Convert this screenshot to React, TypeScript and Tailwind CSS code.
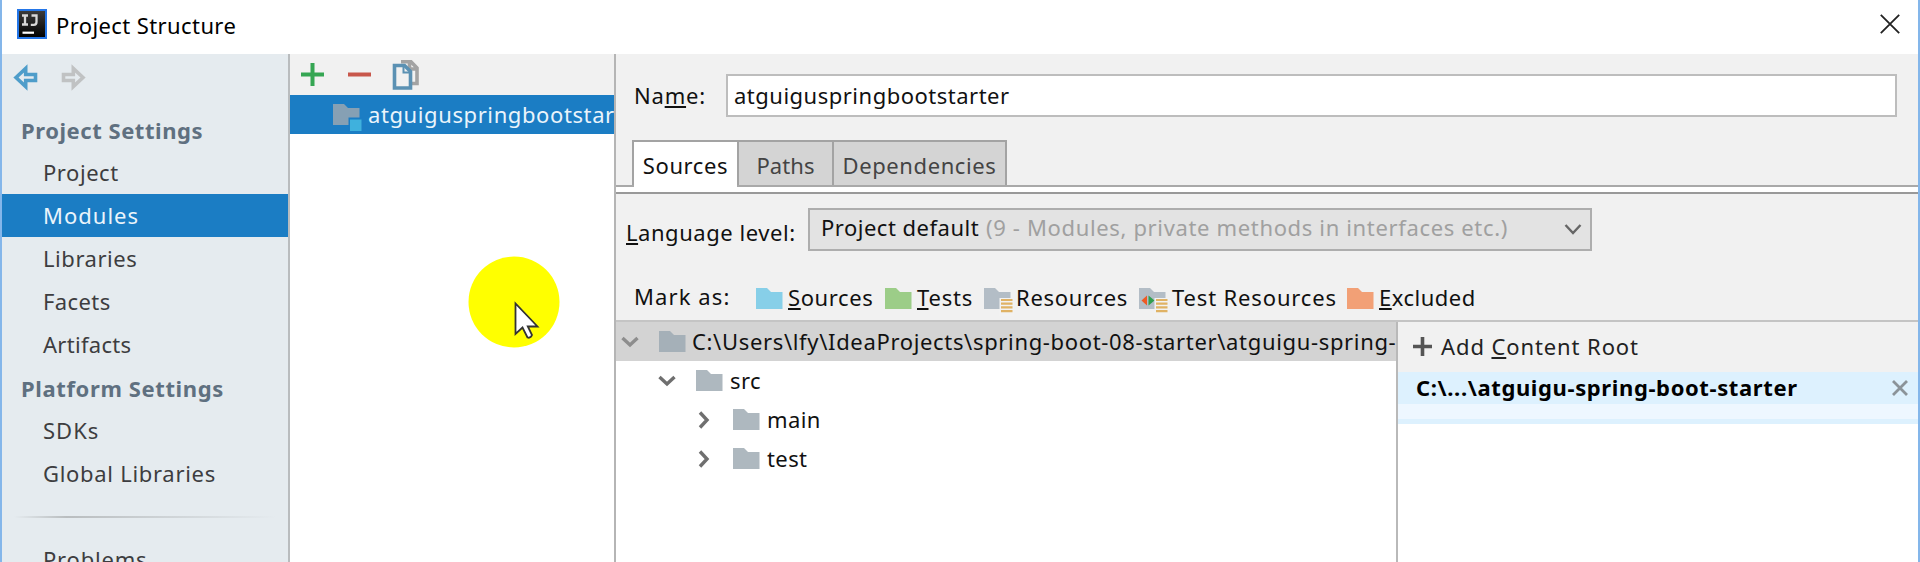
import type { ReactNode } from 'react';
import { clsx } from 'clsx';

function Mnemonic({ children }: { children: string }) {
  return <span className="underline decoration-2 underline-offset-[2px]">{children}</span>;
}

function Folder({ className, children }: { className: string; children?: ReactNode }) {
  return (
    <svg viewBox="0 0 30 28" className={clsx('h-7 w-[30px] shrink-0', className)}>
      <path d="M0 0H11L15 4H26.5V21H0Z" fill="currentColor" />
      {children}
    </svg>
  );
}

function ResourceLines() {
  return (
    <>
      <path d="M15.5 10H30V28H15.5Z" fill="#f2f2f2" />
      <path d="M17 12H28.5M17 15.7H28.5M17 19.4H28.5M17 23.1H28.5" stroke="#e0b264" strokeWidth="2.2" />
    </>
  );
}

function Chevron({ open, className }: { open?: boolean; className: string }) {
  return (
    <svg viewBox="0 0 18 18" className={clsx('size-[18px] shrink-0', className)} fill="none" stroke="currentColor" strokeWidth="3.4">
      <path d={open ? 'M1.5 5L9 12L16.5 5' : 'M5 1.5L12 9L5 16.5'} />
    </svg>
  );
}

function TitleBar() {
  return (
    <header className="flex h-[54px] shrink-0 items-start bg-white pl-[15px] pr-[18px]">
      <svg viewBox="0 0 30 30" className="mt-[9px] size-[30px]">
        <defs>
          <linearGradient id="logo" x1="0" y1="0" x2="0" y2="1">
            <stop offset="0" stopColor="#3d3d3d" />
            <stop offset="1" stopColor="#000" />
          </linearGradient>
        </defs>
        <rect x="1" y="1" width="28" height="28" fill="url(#logo)" stroke="#2476e8" strokeWidth="2" />
        <path d="M5 6.5H11M8 6.5V15.5M5 15.5H11M14.5 6.5H19.5V13Q19.5 15.8 16.8 15.8H13.8" fill="none" stroke="#d8d8d8" strokeWidth="2.3" />
        <path d="M5.5 23.7H17" stroke="#fff" strokeWidth="2.2" />
      </svg>
      <h1 className="ml-[9px] mt-[10px] flex-1 tracking-[0.4px] text-black">Project Structure</h1>
      <svg viewBox="0 0 20 20" className="mt-[14px] size-5" stroke="#222" strokeWidth="1.8">
        <path d="M0.8 0.8L19.2 19.2M19.2 0.8L0.8 19.2" />
      </svg>
    </header>
  );
}

function NavHeader({ children, className }: { children: string; className: string }) {
  return <h2 className={clsx('h-[43px] pl-[19px] pt-[7px] font-bold text-[#5f7080]', className)}>{children}</h2>;
}

function NavItem({ children, selected, className }: { children: string; selected?: boolean; className: string }) {
  return (
    <li className={clsx('h-[43px] pl-[41px] pt-[6px]', selected ? 'bg-[#1b7dc4] text-[#eaf4fb]' : 'text-[#3d3d40]', className)}>
      {children}
    </li>
  );
}

function Sidebar() {
  return (
    <nav className="w-[288px] shrink-0 border-r-2 border-[#b9bcbe] bg-[#e5ebef]">
      <div className="flex h-[54px] gap-[22px] pl-[11px] pt-[10px]">
        <svg viewBox="0 0 26 27" className="h-[27px] w-[26px]" fill="none" stroke="#4e9dca" strokeWidth="3.6">
          <path d="M3 13.5L12.7 4.5V10.5H22.5V16.5H12.7V22.5Z" />
        </svg>
        <svg viewBox="0 0 26 27" className="h-[27px] w-[26px]" fill="none" stroke="#c0c2c3" strokeWidth="3.6">
          <path d="M22 13.5L12.3 4.5V10.5H2.5V16.5H12.3V22.5Z" />
        </svg>
      </div>
      <NavHeader className="tracking-[0.55px]">Project Settings</NavHeader>
      <ul>
        <NavItem className="tracking-[0.55px]">Project</NavItem>
        <NavItem selected className="tracking-[1px]">Modules</NavItem>
        <NavItem className="tracking-[0.55px]">Libraries</NavItem>
        <NavItem className="tracking-[0.4px]">Facets</NavItem>
        <NavItem className="tracking-[0.3px]">Artifacts</NavItem>
      </ul>
      <NavHeader className="tracking-[0.62px]">Platform Settings</NavHeader>
      <ul>
        <NavItem className="tracking-[1px]">SDKs</NavItem>
        <NavItem className="tracking-[0.7px]">Global Libraries</NavItem>
      </ul>
      <div className="mx-[12px] mb-[20px] mt-[21px] h-[2px] bg-linear-to-r from-transparent via-[#b9bdbf] via-20% to-transparent" />
      <ul>
        <NavItem className="tracking-[0.8px]">Problems</NavItem>
      </ul>
    </nav>
  );
}

function ModuleList() {
  return (
    <section className="w-[326px] shrink-0 overflow-hidden border-r-2 border-[#b5b5b5] bg-white">
      <div className="flex h-[41px] items-start bg-[#f1f1f1] pl-[11px] pt-[6px]">
        <svg viewBox="0 0 23 23" className="mt-[3px] size-[23px]" stroke="#35a653" strokeWidth="4">
          <path d="M0 11.5H23M11.5 0V23" />
        </svg>
        <svg viewBox="0 0 23 23" className="ml-[24px] mt-[3px] size-[23px]" stroke="#c8574b" strokeWidth="4">
          <path d="M0 11.5H23" />
        </svg>
        <svg viewBox="0 0 28 31" className="ml-[21px] h-[31px] w-7" fill="none" strokeWidth="3.6">
          <path d="M9 1.8H19L25 8V23.5H20M17.5 2V9H25" stroke="#a3a3a3" />
          <path d="M2.5 5.5H12.5L18.5 11.5V28H2.5Z" fill="#f1f1f1" stroke="#5b91b3" />
          <path d="M11.5 6V12.5H18" stroke="#5b91b3" strokeWidth="2" />
        </svg>
      </div>
      <div className="flex h-[39px] items-start bg-[#1b7dc4] pl-[43px] text-[#eaf4fb]">
        <Folder className="mt-[9px] text-[#86a0b4]">
          <path d="M15.5 13.5H30V28H15.5Z" fill="#1b7dc4" />
          <path d="M17 15.5H28.5V27H17Z" fill="#3fb1dd" />
        </Folder>
        <span className="ml-[5px] mt-[4px] w-[246px] shrink-0 overflow-hidden tracking-[0.6px]">atguiguspringbootstarter</span>
      </div>
    </section>
  );
}

function Tab({ children, active, className }: { children: string; active?: boolean; className: string }) {
  return (
    <div
      className={clsx(
        'h-[47px] border-t-2 border-r-2 border-[#a3a3a3] pt-[8px] text-center',
        active ? 'bg-white text-[#111]' : 'border-b-2 bg-[#d4d4d4] text-[#444]',
        className,
      )}
    >
      {children}
    </div>
  );
}

function MarkAs() {
  return (
    <div className="mt-[30px] flex h-[39px] items-start pl-[18px] text-[#111]">
      <span className="w-[122px] tracking-[1.1px]">Mark as:</span>
      <Folder className="mt-[7px] text-[#87cfe8]" />
      <span className="ml-[2px] mt-px w-[97px] tracking-[0.6px]"><Mnemonic>S</Mnemonic>ources</span>
      <Folder className="mt-[7px] text-[#9ccd88]" />
      <span className="ml-[2px] mt-px w-[67px] tracking-[0.8px]"><Mnemonic>T</Mnemonic>ests</span>
      <Folder className="mt-[7px] text-[#b3bdc6]"><ResourceLines /></Folder>
      <span className="ml-[2px] mt-px w-[123px] tracking-[0.7px]">Resources</span>
      <Folder className="mt-[7px] text-[#b3bdc6]">
        <path d="M8 7.5V17.5L2.5 12.5Z" fill="#ee5a24" />
        <path d="M9.5 7.5V17.5L15.5 12.5Z" fill="#2f9e4f" />
        <ResourceLines />
      </Folder>
      <span className="ml-[3px] mt-px w-[175px] tracking-[0.85px]">Test Resources</span>
      <Folder className="mt-[7px] text-[#f2a076]" />
      <span className="ml-[2px] mt-px tracking-[0.5px]"><Mnemonic>E</Mnemonic>xcluded</span>
    </div>
  );
}

function TreeRow({ label, indent, open }: { label: string; indent: string; open?: boolean }) {
  return (
    <div className={clsx('flex h-[39px] items-start whitespace-nowrap', indent)}>
      <Chevron open={open} className="mt-[11px] text-[#6f6f6f]" />
      <Folder className="ml-[20px] mt-[9px] text-[#aeb8bf]" />
      <span className="ml-[4px] mt-[4px] tracking-[0.4px] text-[#111]">{label}</span>
    </div>
  );
}

function ContentTree() {
  return (
    <div className="w-[782px] shrink-0 overflow-hidden border-r-2 border-[#b9b9b9] bg-white">
      <div className="flex h-[39px] items-start whitespace-nowrap bg-[#d3d3d3] pl-[5px]">
        <Chevron open className="mt-[11px] text-[#8d8d8d]" />
        <Folder className="ml-[20px] mt-[9px] text-[#a5b0b8]" />
        <span className="ml-[3px] mt-[4px] tracking-[0.66px] text-[#111]">
          C:\Users\lfy\IdeaProjects\spring-boot-08-starter\atguigu-spring-
        </span>
      </div>
      <TreeRow label="src" indent="pl-[42px]" open />
      <TreeRow label="main" indent="pl-[79px]" />
      <TreeRow label="test" indent="pl-[79px]" />
    </div>
  );
}

function ContentRoots() {
  return (
    <aside className="flex-1 bg-white">
      <div className="flex h-[50px] items-start bg-[#f1f1f1] pl-[15px] text-[#222]">
        <svg viewBox="0 0 19 19" className="mt-[15px] size-[19px]" stroke="#555" strokeWidth="3.6">
          <path d="M0 9.5H19M9.5 0V19" />
        </svg>
        <span className="ml-[9px] mt-[9px] tracking-[0.9px]">Add <Mnemonic>C</Mnemonic>ontent Root</span>
      </div>
      <div className="flex h-8 items-start justify-between bg-[#ddf1fe] pl-[18px] pr-[10px]">
        <span className="font-bold tracking-[0.62px] text-black">C:\...\atguigu-spring-boot-starter</span>
        <svg viewBox="0 0 16 16" className="mt-[8px] size-4" stroke="#8b9399" strokeWidth="2.8">
          <path d="M1 1L15 15M15 1L1 15" />
        </svg>
      </div>
      <div className="h-[20px] border-b-[5px] border-[#ddf1fe] bg-[#eef7ff]" />
    </aside>
  );
}

function ModuleEditor() {
  return (
    <main className="flex min-w-0 flex-1 flex-col bg-[#f1f1f1]">
      <div className="mt-[20px] flex h-[43px] items-start pl-[18px] pr-[21px] text-[#111]">
        <label className="mt-[6px] w-[92px] tracking-[0.8px]">Na<Mnemonic>m</Mnemonic>e:</label>
        <div className="h-[43px] flex-1 border-2 border-[#bdbdbd] bg-white pl-[6px] pt-[4px] tracking-[0.5px]">
          atguiguspringbootstarter
        </div>
      </div>
      <div className="mt-[23px] flex h-[45px] pl-[16px]">
        <Tab active className="w-[107px] border-l-2 tracking-[0.6px]">Sources</Tab>
        <Tab className="w-[95px] tracking-[0.1px]">Paths</Tab>
        <Tab className="w-[173px] tracking-[0.6px]">Dependencies</Tab>
      </div>
      <div className="flex h-[9px]">
        <div className="w-[18px] border-t-2 border-b-2 border-t-[#a9a9a9] border-b-[#999] bg-white" />
        <div className="w-[103px] border-b-2 border-[#999] bg-white" />
        <div className="flex-1 border-t-2 border-b-2 border-t-[#a9a9a9] border-b-[#999] bg-white" />
      </div>
      <div className="mt-[14px] flex h-[43px] items-start pl-[10px]">
        <label className="mt-[9px] w-[182px] tracking-[0.55px] text-[#111]"><Mnemonic>L</Mnemonic>anguage level:</label>
        <div className="flex h-[43px] w-[784px] items-start border-2 border-[#aeaeae] bg-[#e3e3e3] pl-[11px] pt-[2px]">
          <span className="w-[165px] tracking-[0.5px] text-[#111]">Project default</span>
          <span className="flex-1 tracking-[0.65px] text-[#a0a0a0]">(9 - Modules, private methods in interfaces etc.)</span>
          <svg viewBox="0 0 18 18" className="mr-[8px] mt-[8px] size-[18px]" fill="none" stroke="#666" strokeWidth="2.4">
            <path d="M1.5 5L9 13L16.5 5" />
          </svg>
        </div>
      </div>
      <MarkAs />
      <div className="flex flex-1 border-t-2 border-[#c4c4c4]">
        <ContentTree />
        <ContentRoots />
      </div>
    </main>
  );
}

export default function App() {
  return (
    <div className="relative flex h-[562px] w-full flex-col overflow-hidden border-x-2 border-[#84b6ea] bg-white font-['Noto_Sans',sans-serif] text-[22px] leading-[30px]">
      <TitleBar />
      <div className="flex min-h-0 flex-1">
        <Sidebar />
        <ModuleList />
        <ModuleEditor />
      </div>
      <svg viewBox="0 0 92 92" className="absolute left-[466px] top-[256px] size-[92px]">
        <circle cx="46" cy="46" r="45.5" fill="#ff0" />
        <path d="M47.5 47.5V78L54.5 71.5L59.5 81.5Q62.5 82.5 64 79L59.8 70.5H69.5Z" fill="#fff" stroke="#333" strokeWidth="1.8" />
      </svg>
    </div>
  );
}
